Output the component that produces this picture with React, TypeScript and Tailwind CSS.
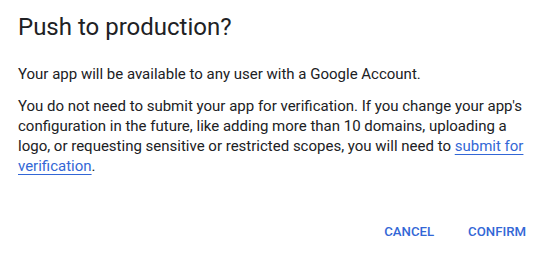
export default function App() {
  return (
    <div className="w-[542px] h-[254px] bg-white flex flex-col font-['Roboto',sans-serif] text-[#202124]">
      <h1 className="pl-[18px] pt-[12px] text-[24px] leading-[30px] font-normal">Push to production?</h1>
      <div className="pl-[18px] pr-[14px] pt-[22px] text-[15px] leading-[20px]">
        <p>Your app will be available to any user with a Google Account.</p>
        <p className="mt-[12px]">
          You do not need to submit your app for verification. If you change your app's configuration in the
          future, like adding more than 10 domains, uploading a logo, or requesting sensitive or restricted scopes,
          you will need to{" "}
          <a href="#" className="text-[#3367d6] underline underline-offset-[3px]">
            submit for verification
          </a>
          .
        </p>
      </div>
      <div className="mt-auto flex justify-end gap-[18px] pr-[8px] pb-[4px]">
        <button className="h-[36px] px-[8px] text-[13.2px] font-medium uppercase text-[#3367d6]">
          Cancel
        </button>
        <button className="h-[36px] px-[8px] text-[13.2px] font-medium uppercase text-[#3367d6]">
          Confirm
        </button>
      </div>
    </div>
  );
}
